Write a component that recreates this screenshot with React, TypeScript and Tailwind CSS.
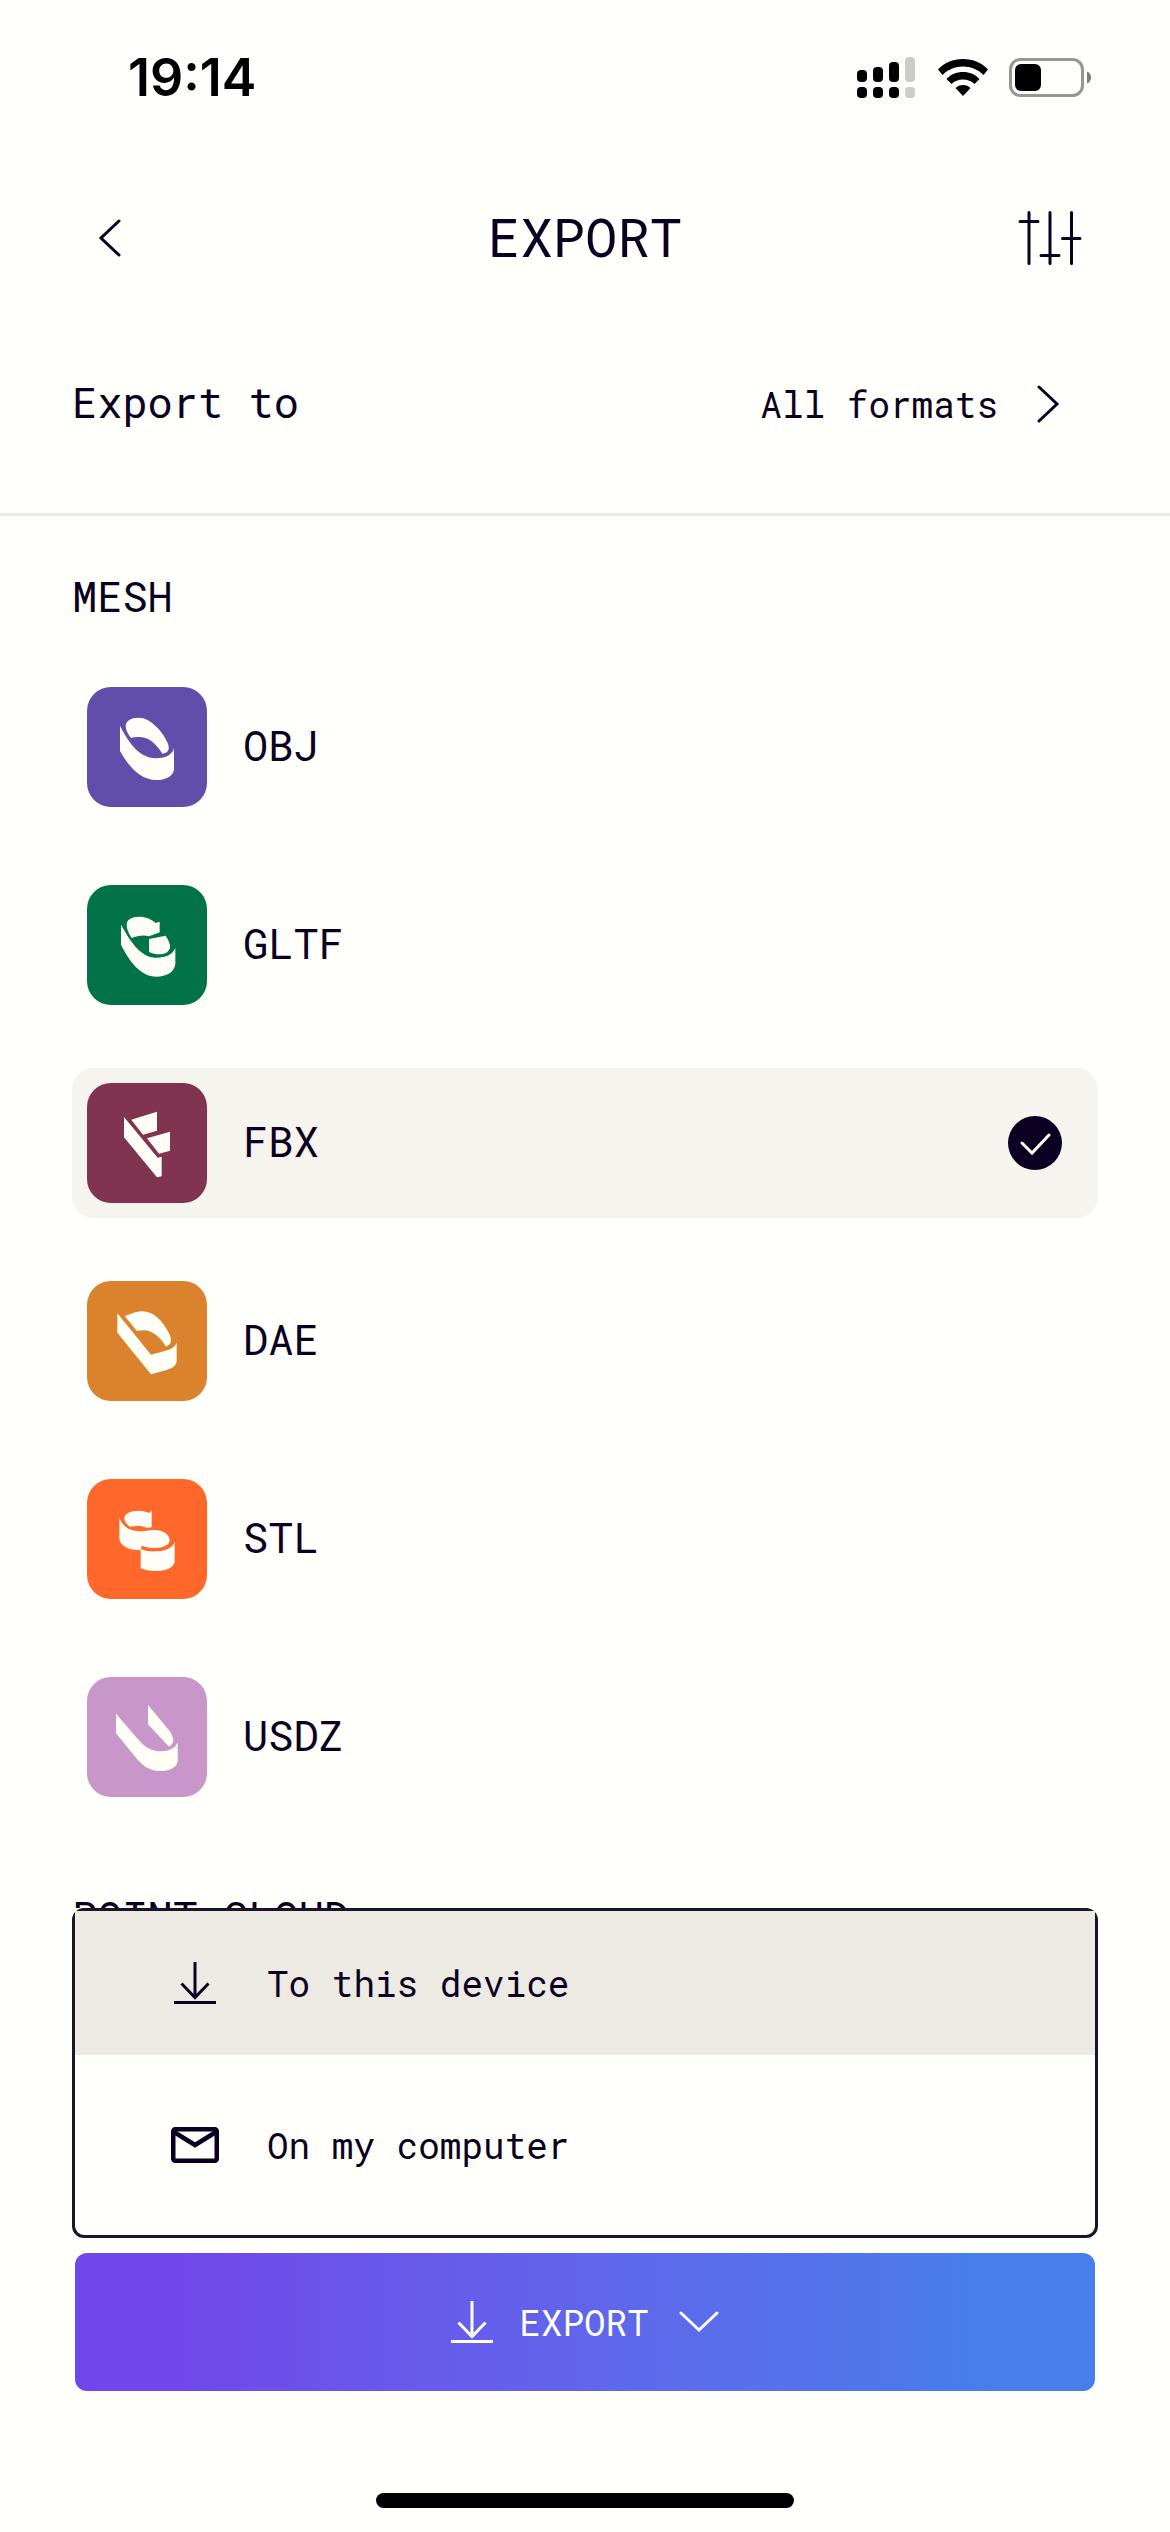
import React, { useState } from "react";

type Format = { name: string; tile: string; shapes: string[] };

const meshFormats: Format[] = [
  {
    name: "OBJ",
    tile: "bg-[#614eab]",
    shapes: [
      "M99 117C118 152 150 214 208 214C238 214 256 202 261 184V248C258 268 234 279 208 279C158 279 122 234 99 192Z",
      "M132 153C122 140 116 128 116 117C117 100 133 92 155 92C190 92 228 134 242 168C249 184 246 198 226 200C212 178 190 150 158 150C147 150 138 151 132 153Z",
    ],
  },
  {
    name: "GLTF",
    tile: "bg-[#027249]",
    shapes: [
      "M102 119C125 160 158 218 207 218C238 218 258 207 265 188V238C262 262 238 275 209 275C160 275 125 226 102 179Z",
      "M134 159C124 145 119 130 119 119C119 103 134 95 157 95C176 95 194 103 206 114L218 110V142L186 154C170 149 150 153 134 159Z",
      "M186 162L236 152C244 164 250 178 249 186C247 200 236 208 218 208C206 208 196 205 186 201Z",
    ],
  },
  {
    name: "FBX",
    tile: "bg-[#80344f]",
    shapes: [
      "M111 102V163L210 283L224 280V221L212 224Z",
      "M133 110L210 86V143L168 155Z",
      "M180 166L249 146V203L216 212Z",
    ],
  },
  {
    name: "DAE",
    tile: "bg-[#da822c]",
    shapes: [
      "M91 97V155L192 280L239 267C260 261 269 252 269 238V184C263 203 250 207 192 221Z",
      "M113 105L145 94C190 80 225 115 246 157C256 178 254 190 237 197C222 172 198 148 170 148L149 149Z",
    ],
  },
  {
    name: "STL",
    tile: "bg-[#ff682a]",
    shapes: [
      "M97 115C104 142 130 158 165 157C178 156 190 153 202 153C228 153 248 166 248 184C248 198 228 207 205 207C190 207 176 204 164 200L161 214C125 214 97 200 97 178Z",
      "M130 143C118 136 112 127 112 119C112 103 130 95 155 95C168 95 179 98 187 102L194 94V145C184 147 175 147 165 142C152 140 140 141 130 143Z",
      "M161 210C180 217 190 218 205 217C235 217 258 206 263 188V248C260 266 236 276 204 276C188 276 172 273 161 268Z",
    ],
  },
  {
    name: "USDZ",
    tile: "bg-[#c896c8]",
    shapes: [
      "M87 110L150 184C170 208 192 223 218 223C246 223 266 214 272 196V254C268 272 246 282 217 282C184 282 165 262 150 246L87 169Z",
      "M183 84L246 160C262 182 264 198 246 209L183 142Z",
    ],
  },
];

function StatusBar() {
  return (
    <div className="flex h-[156px] shrink-0 items-center justify-between pr-[78px] pl-[128px] text-black">
      <time className="font-['Inter',sans-serif] text-[52px] leading-none font-semibold">19:14</time>
      <div className="flex items-center gap-[21px]">
        <svg className="h-[42px] w-[60px]" viewBox="0 0 60 42" fill="currentColor" aria-hidden="true">
          <rect x="0" y="13" width="10" height="12" rx="4" />
          <rect x="16" y="10" width="10" height="15" rx="4" />
          <rect x="32" y="5" width="10" height="20" rx="4" />
          <rect x="0" y="30" width="10" height="11" rx="4" />
          <rect x="16" y="30" width="10" height="11" rx="4" />
          <rect x="32" y="30" width="10" height="11" rx="4" />
          <rect x="48" y="0" width="10" height="25" rx="4" fill="#cbcbc8" />
          <rect x="48" y="30" width="10" height="11" rx="4" fill="#cbcbc8" />
        </svg>
        <svg className="h-[38px] w-[50px]" viewBox="0 0 50 38" fill="currentColor" aria-hidden="true">
          <path d="M25 0C35 0 44 4 50 10.500L45.500 16C40 10.500 33 7.500 25 7.500S10 10.500 4.500 16L0 10.500C6 4 15 0 25 0Z" />
          <path d="M25 13C31.500 13 37.500 15.500 41.500 20L36.500 25C33.500 22 29.500 20.500 25 20.500S16.500 22 13.500 25L8.500 20C12.500 15.500 18.500 13 25 13Z" />
          <path d="M25 26C28 26 30.500 27 32.500 29L25 37L17.500 29C19.500 27 22 26 25 26Z" />
        </svg>
        <svg className="h-[40px] w-[83px]" viewBox="0 0 83 40" fill="none" aria-hidden="true">
          <rect x="1.500" y="1.500" width="72" height="36" rx="10" stroke="#969693" strokeWidth="3" />
          <rect x="6" y="6" width="26" height="27" rx="6" fill="currentColor" />
          <path d="M78 13.500C83.500 15.500 83.500 23.500 78 25.500Z" fill="#7d7d7b" />
        </svg>
      </div>
    </div>
  );
}

function DownloadIcon() {
  return (
    <svg className="size-[42px]" viewBox="0 0 42 42" fill="none" stroke="currentColor" strokeWidth="3" aria-hidden="true">
      <path d="M21 0V34.500M7.500 21.500L21 35.500L34.500 21.500M0 40.500H42" />
    </svg>
  );
}

function MailIcon() {
  return (
    <svg className="h-[36px] w-[48px]" viewBox="0 0 48 36" fill="none" stroke="currentColor" strokeWidth="4.500" aria-hidden="true">
      <rect x="2.250" y="2.250" width="43.500" height="31.500" rx="2" />
      <path d="M3 5L24 18L45 5" />
    </svg>
  );
}

function FormatRow({ format, checked, onSelect }: { format: Format; checked: boolean; onSelect: () => void }) {
  return (
    <label className="relative flex h-[150px] cursor-pointer items-center gap-9 rounded-[21px] pr-9 pl-[15px] has-checked:bg-[#f5f4ee]">
      <input className="sr-only" type="radio" name="format" value={format.name} checked={checked} onChange={onSelect} />
      <span className={`size-[120px] shrink-0 rounded-3xl ${format.tile}`}>
        <svg className="size-full" viewBox="0 0 360 360" fill="#fffff8" aria-hidden="true">
          {format.shapes.map((d) => (
            <path key={d} d={d} />
          ))}
        </svg>
      </span>
      <span className="flex-1 pb-1">{format.name}</span>
      {checked && (
        <svg className="size-[54px]" viewBox="0 0 54 54" fill="none" aria-hidden="true">
          <circle cx="27" cy="27" r="27" fill="#0b0022" />
          <path d="M14 27L24 37L41 19" stroke="#fffffb" strokeWidth="3" strokeLinecap="round" />
        </svg>
      )}
    </label>
  );
}

export default function App() {
  const [selected, setSelected] = useState("FBX");

  return (
    <div className="flex h-screen flex-col bg-[#fffffb] font-['Roboto_Mono','Liberation_Mono',monospace] text-[42px] leading-[56px] text-[#0b0022]">
      <StatusBar />

      <header className="flex h-[164px] shrink-0 items-center justify-between px-[87px]">
        <button type="button" aria-label="Back" className="flex h-[66px] w-[66px] items-center pl-3">
          <svg className="h-[38px] w-[22px]" viewBox="0 0 22 38" fill="none" stroke="currentColor" strokeWidth="3" strokeLinecap="round" aria-hidden="true">
            <path d="M20 2L2 19L20 36" />
          </svg>
        </button>
        <h1 className="pb-1 text-[54px] leading-[72px]">EXPORT</h1>
        <button type="button" aria-label="Settings" className="flex h-[66px] w-[66px] items-center justify-center">
          <svg className="h-[54px] w-[64px]" viewBox="0 0 64 54" fill="none" stroke="currentColor" strokeWidth="3" strokeLinecap="round" aria-hidden="true">
            <path d="M11 1.500V52.500M2 10.500H20M32 1.500V52.500M23 44.500H41M53.500 1.500V52.500M44.500 27.500H62" />
          </svg>
        </button>
      </header>

      <section className="shrink-0 border-b-3 border-[#e9e9e6] pb-[25px]">
        <div className="flex h-[168px] items-center justify-between pr-[110px] pl-[72px]">
          <span className="pb-1">Export to</span>
          <button type="button" className="flex items-center gap-[38px] text-[36px] leading-[48px]">
            All formats
            <svg className="h-[38px] w-6" viewBox="0 0 24 38" fill="none" stroke="currentColor" strokeWidth="3" strokeLinecap="round" aria-hidden="true">
              <path d="M3 2L21 19L3 36" />
            </svg>
          </button>
        </div>
      </section>

      <main className="min-h-0 flex-1 overflow-y-auto px-[72px] pt-[52px] [scrollbar-width:none]">
        <h2>MESH</h2>
        <div role="radiogroup" aria-label="Mesh format" className="mt-12 flex flex-col gap-12">
          {meshFormats.map((format) => (
            <FormatRow
              key={format.name}
              format={format}
              checked={selected === format.name}
              onSelect={() => setSelected(format.name)}
            />
          ))}
        </div>
        <h2 className="mt-[76px]">POINT CLOUD</h2>
      </main>

      <footer className="flex shrink-0 flex-col items-stretch px-[72px] pb-6">
        <div role="menu" className="flex flex-col rounded-xl border-3 border-[#1a1528] text-[36px] leading-[48px]">
          <button type="button" role="menuitem" className="flex h-[144px] items-center gap-12 bg-[#eceae3] pl-24">
            <span className="flex w-12 justify-center">
              <DownloadIcon />
            </span>
            To this device
          </button>
          <button type="button" role="menuitem" className="flex h-[180px] items-center gap-12 pl-24">
            <span className="flex w-12 justify-center">
              <MailIcon />
            </span>
            On my computer
          </button>
        </div>
        <button
          type="button"
          className="mx-[3px] mt-[15px] flex h-[138px] items-center justify-center gap-[26px] rounded-xl bg-linear-to-r from-[#7047eb] from-10% to-[#477eea] to-90% text-[36px] leading-[48px] text-white"
        >
          <DownloadIcon />
          EXPORT
          <svg className="ml-1 h-[22px] w-[40px]" viewBox="0 0 40 22" fill="none" stroke="currentColor" strokeWidth="3" strokeLinecap="round" aria-hidden="true">
            <path d="M2 2L20 19L38 2" />
          </svg>
        </button>
        <div className="mt-[102px] h-[15px] w-[418px] self-center rounded-full bg-black" />
      </footer>
    </div>
  );
}
